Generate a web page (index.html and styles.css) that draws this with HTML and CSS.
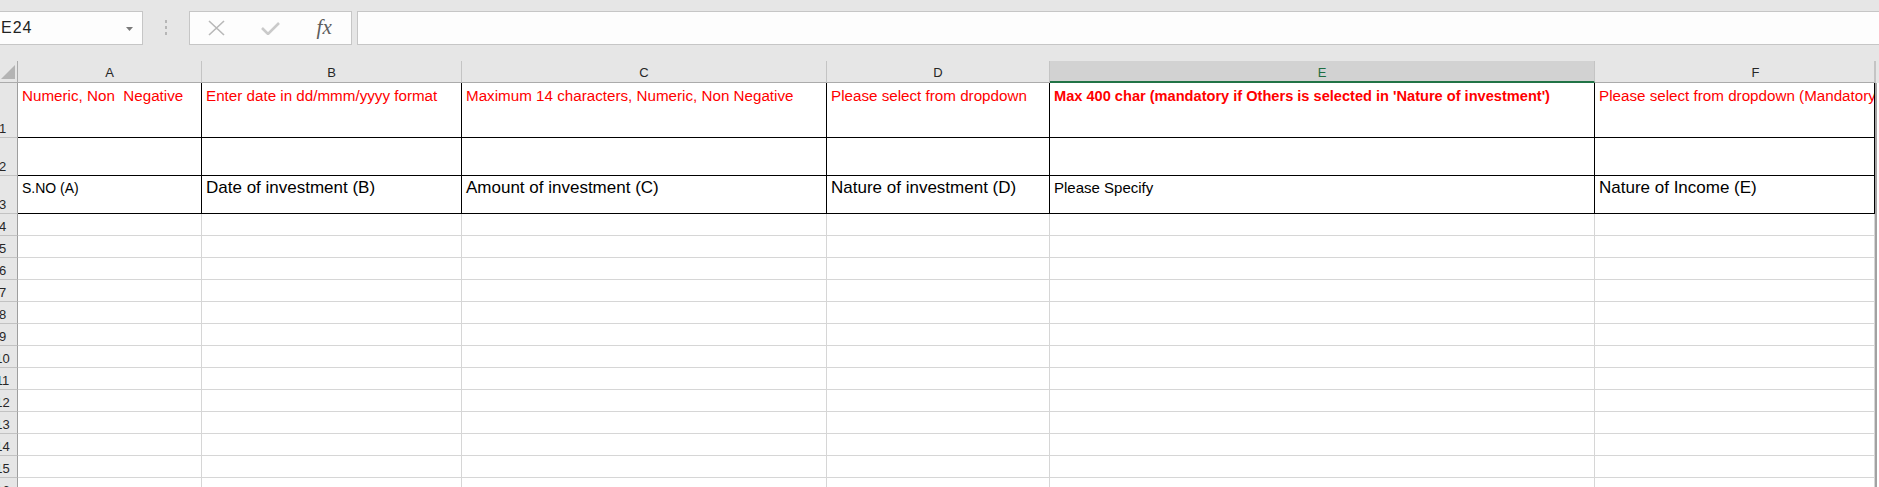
FILE: index.html
```html
<!DOCTYPE html>
<html lang="en">
<head>
    <meta charset="utf-8">
    <title>Investment Sheet</title>
    <link rel="stylesheet" href="styles.css">
</head>
<body>
    <div class="toolbar">
        <div class="namebox">
            <span class="ref">E24</span>
            <svg class="drop" width="7" height="4" viewBox="0 0 7 4"><polygon points="0,0 7,0 3.5,4" fill="#7a7a7a"/></svg>
        </div>
        <div class="grip"><i></i><i></i><i></i></div>
        <div class="fbtns">
            <span class="ic">
                <svg width="17" height="16" viewBox="0 0 17 16"><path d="M1 1 L16 15 M16 1 L1 15" stroke="#b8b8b8" stroke-width="1.6" fill="none"/></svg>
            </span>
            <span class="ic">
                <svg width="19" height="13" viewBox="0 0 19 13"><polyline points="1,6 7,12 18,1" stroke="#cacaca" stroke-width="2.6" fill="none"/></svg>
            </span>
            <span class="ic fx">fx</span>
        </div>
        <div class="fbar"></div>
    </div>

    <div class="sheet">
        <div class="row head">
            <div class="corner"><span class="tri"></span></div>
            <div>A</div><div>B</div><div>C</div><div>D</div><div class="sel">E</div><div class="colf">F</div>
            <div class="edge"></div>
        </div>
        <div class="row r1 ruled">
            <div class="rh">1</div>
            <div class="c">Numeric, Non  Negative</div>
            <div class="c">Enter date in dd/mmm/yyyy format</div>
            <div class="c">Maximum 14 characters, Numeric, Non Negative</div>
            <div class="c">Please select from dropdown</div>
            <div class="c req">Max 400 char (mandatory if Others is selected in 'Nature of investment')</div>
            <div class="c">Please select from dropdown (Mandatory)</div>
            <div class="edge"></div>
        </div>
        <div class="row r2 ruled">
            <div class="rh">2</div>
            <div class="c"></div><div class="c"></div><div class="c"></div><div class="c"></div><div class="c"></div><div class="c"></div>
            <div class="edge"></div>
        </div>
        <div class="row r3 ruled">
            <div class="rh">3</div>
            <div class="c sno">S.NO (A)</div>
            <div class="c">Date of investment (B)</div>
            <div class="c">Amount of investment (C)</div>
            <div class="c">Nature of investment (D)</div>
            <div class="c spec">Please Specify</div>
            <div class="c">Nature of Income (E)</div>
            <div class="edge"></div>
        </div>
        <div class="row"><div class="rh">4</div><div></div><div></div><div></div><div></div><div></div><div></div><div class="edge"></div></div>
        <div class="row"><div class="rh">5</div><div></div><div></div><div></div><div></div><div></div><div></div><div class="edge"></div></div>
        <div class="row"><div class="rh">6</div><div></div><div></div><div></div><div></div><div></div><div></div><div class="edge"></div></div>
        <div class="row"><div class="rh">7</div><div></div><div></div><div></div><div></div><div></div><div></div><div class="edge"></div></div>
        <div class="row"><div class="rh">8</div><div></div><div></div><div></div><div></div><div></div><div></div><div class="edge"></div></div>
        <div class="row"><div class="rh">9</div><div></div><div></div><div></div><div></div><div></div><div></div><div class="edge"></div></div>
        <div class="row"><div class="rh">10</div><div></div><div></div><div></div><div></div><div></div><div></div><div class="edge"></div></div>
        <div class="row"><div class="rh">11</div><div></div><div></div><div></div><div></div><div></div><div></div><div class="edge"></div></div>
        <div class="row"><div class="rh">12</div><div></div><div></div><div></div><div></div><div></div><div></div><div class="edge"></div></div>
        <div class="row"><div class="rh">13</div><div></div><div></div><div></div><div></div><div></div><div></div><div class="edge"></div></div>
        <div class="row"><div class="rh">14</div><div></div><div></div><div></div><div></div><div></div><div></div><div class="edge"></div></div>
        <div class="row"><div class="rh">15</div><div></div><div></div><div></div><div></div><div></div><div></div><div class="edge"></div></div>
        <div class="row"><div class="rh">16</div><div></div><div></div><div></div><div></div><div></div><div></div><div class="edge"></div></div>
    </div>
</body>
</html>
```

FILE: styles.css
```css
* {
    box-sizing: border-box;
}
body {
    margin: 0;
    height: 487px;
    overflow: hidden;
    background-color: #e6e6e6;
    font-family: "Liberation Sans", Arial, sans-serif;
}

/* formula bar */
.toolbar {
    display: flex;
    align-items: flex-start;
    height: 61px;
    padding-top: 11px;
}
.namebox {
    margin-left: -6px; /* left edge is cut off in the window */
    width: 149px;
    height: 34px;
    display: flex;
    align-items: center;
    justify-content: space-between;
    padding: 0 9px 0 6px;
    background: #fdfdfd;
    border: 1px solid #c6c6c6;
}
.ref {
    font-size: 16px;
    letter-spacing: 1px;
    color: #222;
}
.drop {
    margin-top: 1px;
}
.grip {
    width: 46px;
    display: flex;
    flex-direction: column;
    align-items: center;
    gap: 3px;
    padding-top: 9px;
}
.grip i {
    display: block;
    width: 2px;
    height: 3px;
    background: #b6b6b6;
}
.fbtns {
    width: 163px;
    height: 34px;
    display: grid;
    grid-template-columns: 1fr 1fr 1fr;
    align-items: center;
    justify-items: center;
    background: #fdfdfd;
    border: 1px solid #c6c6c6;
}
.ic {
    display: flex;
    align-items: center;
    justify-content: center;
}
.fx {
    font-family: "Liberation Serif", "Times New Roman", serif;
    font-style: italic;
    font-size: 21px;
    color: #5e5e5e;
    margin-top: -1px;
}
.fbar {
    flex: 1;
    height: 34px;
    margin-left: 5px;
    margin-right: -4px;
    background: #fdfdfd;
    border: 1px solid #c6c6c6;
}

/* grid */
.sheet {
    margin-left: -12px; /* row numbers are partly scrolled out */
    background: #fff;
}
.row {
    display: grid;
    grid-template-columns: 30px 184px 260px 365px 223px 545px 280px 1fr;
    height: 22px;
}
.row > div {
    border-right: 1px solid #d6d6d6;
    border-bottom: 1px solid #d6d6d6;
    overflow: hidden;
    white-space: pre;
}
.row .rh {
    background: #e6e6e6;
    border-right-color: #9e9e9e;
    border-bottom-color: #c2c2c2;
    display: flex;
    justify-content: center;
    align-items: flex-end;
    padding-bottom: 1px;
    font-size: 13px;
    line-height: 15px;
    color: #262626;
}
.row .edge {
    border-right: none;
    border-bottom: none;
    border-left: 2px solid #a2a2a2;
}

.head > div {
    background: #e6e6e6;
    border-right-color: #c4c4c4;
    border-bottom-color: #ababab;
    display: flex;
    justify-content: center;
    align-items: center;
    padding-top: 2px;
    font-size: 13px;
    color: #262626;
}
.head .corner {
    justify-content: flex-end;
    align-items: flex-end;
    padding: 0 2px 3px 0;
    border-right-color: #ababab;
}
.tri {
    width: 0;
    height: 0;
    border-left: 14px solid transparent;
    border-bottom: 14px solid #b4b4b4;
}
.head .sel {
    background: #d2d2d2;
    border-bottom: 2px solid #217346;
    color: #1e6e42;
}
.head .colf {
    padding-left: 42px;
}
.head .edge {
    border-left: 1px solid #c4c4c4;
    border-bottom: none;
}

.r1 {
    height: 55px;
}
.r2, .r3 {
    height: 38px;
}
.ruled > .c {
    border-color: #000;
}
.c {
    padding: 3px 3px 0 4px;
    line-height: 20px;
}
.r1 .c {
    color: #ff0000;
    font-size: 15.2px;
}
.r1 .req {
    font-weight: bold;
    font-size: 14.6px;
}
.r3 .c {
    color: #000;
    font-size: 17px;
    padding-top: 2px;
}
.r3 .sno {
    font-size: 14px;
}
.r3 .spec {
    font-size: 15px;
}
```
